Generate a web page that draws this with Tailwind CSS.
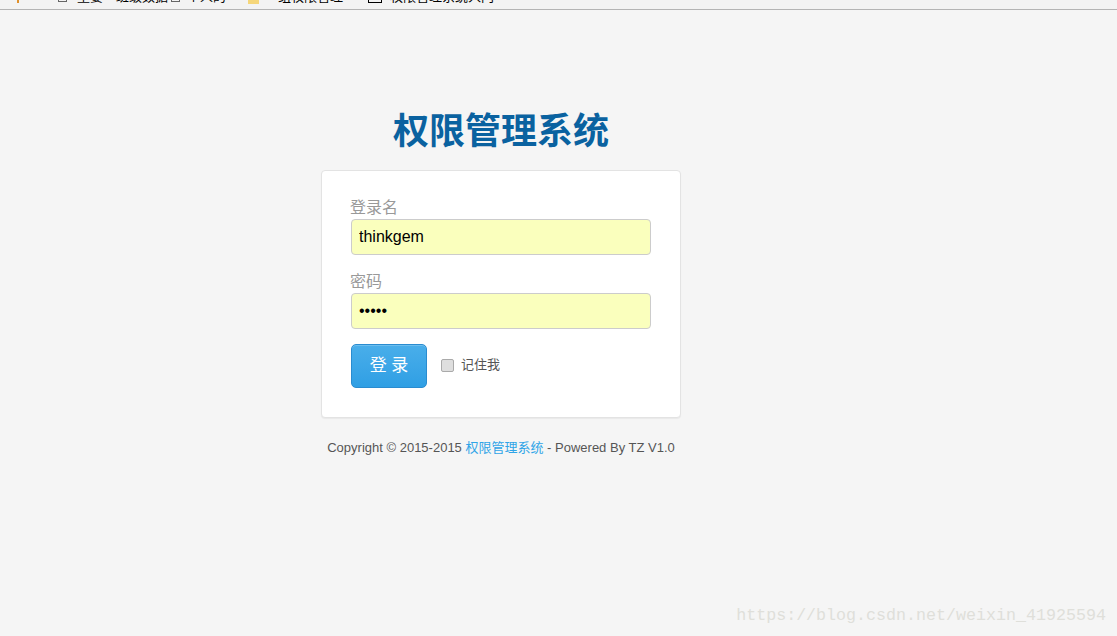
<!DOCTYPE html>
<html lang="en">
<head>
    <meta charset="UTF-8">
    <title>权限管理系统</title>
    <script src="https://cdn.jsdelivr.net/npm/@tailwindcss/browser@4"></script>
</head>
<body class="bg-[#f5f5f5] h-[636px] overflow-hidden relative font-['Liberation_Sans','Noto_Sans_CJK_SC',sans-serif]">
    <!-- browser bookmarks bar, only the bottom edge is in the shot -->
    <div class="h-[10px] border-b border-[#b4b4b4] bg-[#f3f3f3] overflow-hidden flex items-start text-[13px] leading-[13px] text-black">
        <div class="w-[2px] h-[3px] ml-[17px] bg-[#e0902a]"></div>
        <div class="w-[9px] h-[2px] ml-[39px] border-x border-b border-[#666]"></div>
        <span class="ml-[10px] -translate-y-[10px] whitespace-nowrap">重要一班级数据</span>
        <div class="w-[9px] h-[2px] ml-[3px] border-x border-b border-[#666]"></div>
        <span class="ml-[7px] -translate-y-[10px] whitespace-nowrap">个人的</span>
        <div class="w-[11px] h-[4px] ml-[22px] bg-[#f5d67a]"></div>
        <span class="ml-[6px] -translate-y-[10px] whitespace-nowrap">一组权限管理</span>
        <div class="w-[14px] h-[3px] ml-[25px] border-x border-b border-black"></div>
        <span class="ml-[8px] -translate-y-[10px] whitespace-nowrap">权限管理系统入门</span>
    </div>

    <main class="w-[360px] ml-[321px]">
        <h1 class="mt-[97px] h-[50px] text-center text-[36px] leading-[50px] font-bold text-[#0a62a0]">权限管理系统</h1>

        <form class="mt-[13px] h-[248px] bg-white rounded-[4px] border border-[#e3e3e3] shadow-[0_1px_1px_rgba(0,0,0,0.05)] pt-[27px] px-[28px]">
            <label class="block mb-px text-[16px] leading-[20px] text-[#999]">登录名</label>
            <input type="text" value="thinkgem" class="block w-[300px] h-[36px] ml-px px-[7px] bg-[#faffbd] border border-[#ccc] rounded-[4px] text-[16px] text-black outline-none">

            <label class="block mt-[17px] mb-px text-[16px] leading-[20px] text-[#999]">密码</label>
            <input type="password" value="admin" class="block w-[300px] h-[36px] ml-px px-[7px] bg-[#faffbd] border border-[#ccc] rounded-[4px] text-[16px] text-black outline-none">

            <div class="mt-[15px] ml-px flex items-center">
                <button type="button" class="w-[76px] h-[44px] rounded-[5px] border border-[#2a8cd0] bg-gradient-to-b from-[#49aeea] to-[#2f9fe4] text-white text-[17px] shadow-[inset_0_1px_0_rgba(255,255,255,0.2)]">登 录</button>
                <input type="checkbox" class="appearance-none ml-[14px] mb-[2px] w-[13px] h-[13px] bg-[#dedede] border border-[#aaa] rounded-[2px]">
                <span class="ml-[7px] mb-[2px] text-[13px] text-[#555]">记住我</span>
            </div>
        </form>

        <p class="mt-[22px] text-center text-[13px] leading-[16px] text-[#555] whitespace-nowrap">Copyright © 2015-2015 <a href="#" class="text-[#2fa4e7]">权限管理系统</a> - Powered By TZ V1.0</p>
    </main>

    <div class="absolute right-[11px] bottom-[10px] text-[#dfdfda] text-[16.67px] leading-[20px] font-['Liberation_Mono',monospace]">https://blog.csdn.net/weixin_41925594</div>
</body>
</html>
